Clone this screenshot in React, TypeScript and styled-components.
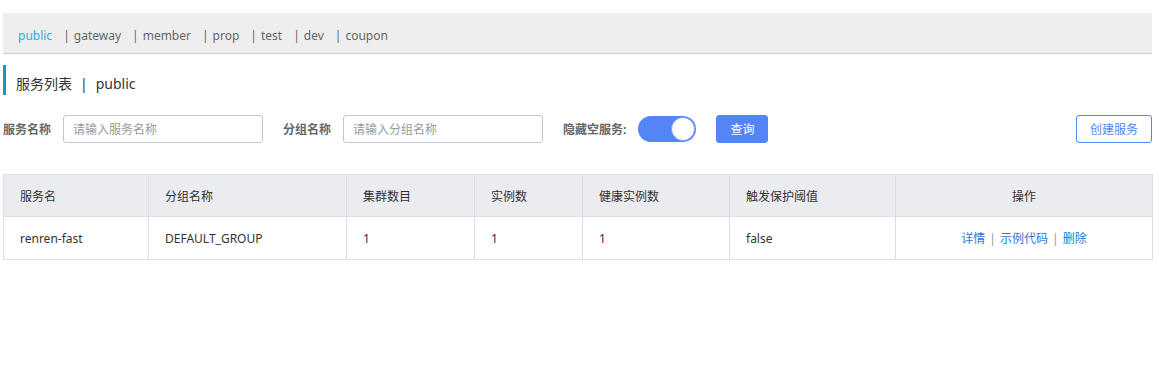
import React from 'react';
import styled, { createGlobalStyle } from 'styled-components';

const GlobalStyle = createGlobalStyle`
  body {
    margin: 0;
    background: #fff;
    font-family: "Noto Sans", "Noto Sans CJK SC", sans-serif;
    font-size: 12px;
    color: #333;
  }
`;

const Page = styled.div`
  padding: 13px 7px 0 3px;
`;

const NamespaceBar = styled.div`
  display: flex;
  align-items: center;
  box-sizing: border-box;
  height: 41px;
  padding: 4px 0 0 15px;
  background: #eee;
  border-bottom: 1px solid #ccc;
`;

const NsItem = styled.span<{ $active?: boolean }>`
  color: ${(p) => (p.$active ? '#1fb0d8' : '#666')};
  margin-right: 11px;
  cursor: pointer;
  white-space: nowrap;
`;

const NsSep = styled.span`
  margin-right: 4px;
`;

const TitleBar = styled.div`
  margin-top: 11px;
  height: 30px;
  box-sizing: border-box;
  padding: 6px 0 0 10px;
  display: flex;
  align-items: center;
  border-left: 3px solid #1a97c8;
  font-size: 14px;
  color: #333;
`;

const Sep = styled.span`
  margin: 0 8px;
`;

const FormRow = styled.div`
  margin-top: 20px;
  display: flex;
  align-items: center;
  height: 28px;
`;

const Label = styled.label<{ $tight?: boolean }>`
  font-weight: bold;
  color: #666;
  margin-right: ${(p) => (p.$tight ? '0' : '12px')};
`;

const Input = styled.input`
  box-sizing: border-box;
  width: 200px;
  height: 28px;
  border: 1px solid #c4c6cf;
  border-radius: 3px;
  padding: 0 9px;
  font-family: inherit;
  font-size: 12px;
  margin-right: 20px;
  outline: none;
  &::placeholder {
    color: #999;
  }
`;

const Switch = styled.div`
  box-sizing: border-box;
  width: 58px;
  height: 26px;
  border-radius: 13px;
  background: #5485f7;
  display: flex;
  justify-content: flex-end;
  align-items: center;
  margin: 0 20px 0 12px;
  padding: 0 1px;
`;

const Knob = styled.div`
  box-sizing: border-box;
  width: 24px;
  height: 24px;
  border-radius: 50%;
  background: #fff;
  border: 1px solid #7ea2f8;
`;

const Button = styled.button<{ $ghost?: boolean }>`
  box-sizing: border-box;
  height: 28px;
  padding: 0 13px;
  border-radius: 3px;
  font-family: inherit;
  font-size: 12px;
  cursor: pointer;
  border: 1px solid #5485f7;
  background: ${(p) => (p.$ghost ? '#fff' : '#5485f7')};
  color: ${(p) => (p.$ghost ? '#5485f7' : '#fff')};
  margin-left: ${(p) => (p.$ghost ? 'auto' : '0')};
`;

const Table = styled.table`
  margin-top: 31px;
  width: 100%;
  border-collapse: collapse;
  table-layout: fixed;
`;

const Th = styled.th<{ $w: number; $center?: boolean }>`
  box-sizing: border-box;
  width: ${(p) => p.$w}px;
  height: 42px;
  background: #ebecf0;
  border: 1px solid #dcdee3;
  font-weight: normal;
  color: #333;
  text-align: ${(p) => (p.$center ? 'center' : 'left')};
  padding: 0 16px;
`;

const Td = styled.td<{ $center?: boolean }>`
  height: 42px;
  border: 1px solid #dcdee3;
  color: #333;
  text-align: ${(p) => (p.$center ? 'center' : 'left')};
  padding: 0 16px;
`;

const Link = styled.a`
  color: #2a78d4;
  text-decoration: none;
  cursor: pointer;
`;

const OpSep = styled.span`
  color: #999;
  margin: 0 4px;
`;

const namespaces = ['public', 'gateway', 'member', 'prop', 'test', 'dev', 'coupon'];

const columns = [
  { title: '服务名', w: 145 },
  { title: '分组名称', w: 198 },
  { title: '集群数目', w: 128 },
  { title: '实例数', w: 108 },
  { title: '健康实例数', w: 147 },
  { title: '触发保护阈值', w: 166 },
  { title: '操作', w: 257, center: true },
];

export default function App() {
  return (
    <Page>
      <GlobalStyle />
      <NamespaceBar>
        {namespaces.map((ns, i) => (
          <NsItem key={ns} $active={i === 0}>
            {i > 0 && <NsSep>|</NsSep>}
            {ns}
          </NsItem>
        ))}
      </NamespaceBar>
      <TitleBar>
        服务列表<Sep>|</Sep>public
      </TitleBar>
      <FormRow>
        <Label>服务名称</Label>
        <Input placeholder="请输入服务名称" />
        <Label>分组名称</Label>
        <Input placeholder="请输入分组名称" />
        <Label $tight>隐藏空服务:</Label>
        <Switch>
          <Knob />
        </Switch>
        <Button>查询</Button>
        <Button $ghost>创建服务</Button>
      </FormRow>
      <Table>
        <thead>
          <tr>
            {columns.map((c) => (
              <Th key={c.title} $w={c.w} $center={c.center}>
                {c.title}
              </Th>
            ))}
          </tr>
        </thead>
        <tbody>
          <tr>
            <Td>renren-fast</Td>
            <Td>DEFAULT_GROUP</Td>
            <Td>1</Td>
            <Td>1</Td>
            <Td>1</Td>
            <Td>false</Td>
            <Td $center>
              <Link>详情</Link>
              <OpSep>|</OpSep>
              <Link>示例代码</Link>
              <OpSep>|</OpSep>
              <Link>删除</Link>
            </Td>
          </tr>
        </tbody>
      </Table>
    </Page>
  );
}
